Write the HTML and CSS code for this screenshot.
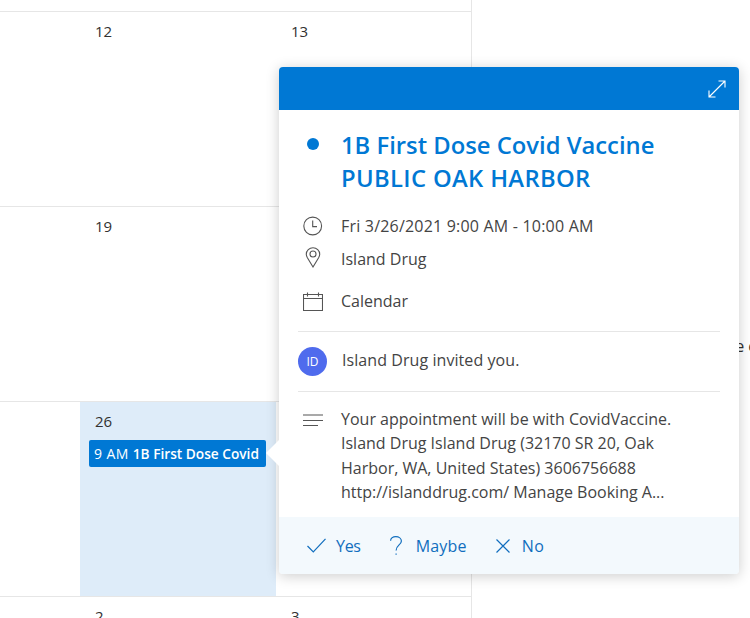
FILE: index.html
```html
<!DOCTYPE html>
<html lang="en">
<head>
    <meta charset="UTF-8">
    <meta name="viewport" content="width=device-width, initial-scale=1.0">
    <title>Calendar</title>
    <link rel="stylesheet" href="styles.css">
</head>
<body>

<div class="page">
    <div class="calendar">
        <div class="cell top"></div><div class="cell top"></div><div class="cell top"></div>

        <div class="cell"></div>
        <div class="cell"><span class="day">12</span></div>
        <div class="cell"><span class="day">13</span></div>

        <div class="cell"></div>
        <div class="cell"><span class="day">19</span></div>
        <div class="cell"></div>

        <div class="cell"></div>
        <div class="cell selected">
            <span class="day">26</span>
            <div class="event">9 AM <b>1B First Dose Covid</b></div>
        </div>
        <div class="cell"></div>

        <div class="cell"></div>
        <div class="cell"><span class="day">2</span></div>
        <div class="cell"><span class="day">3</span></div>
    </div>
    <div class="side">
        <p>e c</p>
    </div>
</div>

<div class="popup">
    <div class="popup-arrow"></div>
    <div class="popup-header">
        <svg width="18" height="18" viewBox="0 0 18 18" fill="none" stroke="#fff" stroke-width="1.1">
            <path d="M1 17L17 1M10.500 1H17V7.500M1 10.500V17H7.500"/>
        </svg>
    </div>

    <div class="title-row">
        <span class="dot"></span>
        <h1>1B First Dose Covid Vaccine <span class="title-second">PUBLIC OAK HARBOR</span></h1>
    </div>

    <div class="info-row time">
        <svg width="20" height="20" viewBox="0 0 20 20" fill="none" stroke="#555" stroke-width="1.1">
            <circle cx="9.700" cy="10" r="8.900"/>
            <path d="M9.700 4.600V10.600H14"/>
        </svg>
        <span>Fri 3/26/2021 9:00 AM - 10:00 AM</span>
    </div>
    <div class="info-row place">
        <svg width="20" height="21" viewBox="0 0 20 21" fill="none" stroke="#555" stroke-width="1.1">
            <path d="M10 20L4.400 10.800C3.500 9.200 3.300 8 3.300 7.200C3.300 3.500 6.300 .7 10 .7S16.700 3.500 16.700 7.200C16.700 8 16.500 9.200 15.600 10.800Z"/>
            <circle cx="10" cy="7" r="3"/>
        </svg>
        <span>Island Drug</span>
    </div>
    <div class="info-row cal">
        <svg width="20" height="19" viewBox="0 0 20 19" fill="none" stroke="#555" stroke-width="1.1">
            <path d="M.5 2.500H19.500V18.500H.5ZM.5 6.500H19.500M4.500 .5V4.500M15.500 .5V4.500"/>
        </svg>
        <span>Calendar</span>
    </div>

    <div class="invite">
        <span class="avatar">ID</span>
        <span class="invite-text">Island Drug invited you.</span>
    </div>

    <div class="notes">
        <svg width="20" height="14" viewBox="0 0 20 14" fill="none" stroke="#555" stroke-width="1.1">
            <path d="M0 2H20M0 7.500H20M0 12.500H15"/>
        </svg>
        <p>Your appointment will be with CovidVaccine. Island Drug Island Drug (32170 SR 20, Oak Harbor, WA, United States) 3606756688 http://islanddrug.com/ Manage Booking A...</p>
    </div>

    <div class="actions">
        <div class="action yes">
            <svg width="19" height="15" viewBox="0 0 19 15" fill="none" stroke="#106ebe" stroke-width="1.2">
                <path d="M.5 8L6.300 14L18.500 .8"/>
            </svg>
            <span>Yes</span>
        </div>
        <div class="action maybe">
            <svg width="12" height="19" viewBox="0 0 12 19" fill="none" stroke="#106ebe" stroke-width="1.2">
                <path d="M.6 4.800C.6 2.300 2.900 .6 5.800 .6C8.900 .6 11.400 2.500 11.400 5C11.400 9 6.100 9 6.100 14.500"/>
                <path d="M6.100 17.500V18.700"/>
            </svg>
            <span>Maybe</span>
        </div>
        <div class="action no">
            <svg width="14" height="14" viewBox="0 0 14 14" fill="none" stroke="#106ebe" stroke-width="1.2">
                <path d="M.5 .5L13.500 13.500M13.500 .5L.5 13.500"/>
            </svg>
            <span>No</span>
        </div>
    </div>
</div>

</body>
</html>
```

FILE: styles.css
```css
* {
    box-sizing: border-box;
}

body {
    margin: 0;
    height: 618px;
    overflow: hidden;
    background-color: white;
    font-family: "Open Sans", "Noto Sans", sans-serif;
    color: #323130;
}

.page {
    display: flex;
    height: 618px;
    overflow: hidden;
}

.calendar {
    display: grid;
    grid-template-columns: 80px 196px 196px;
    grid-template-rows: 12px 195px 195px 195px 21px;
    width: 472px;
    flex-shrink: 0;
    border-right: 1px solid #e6e6e6;
}

.cell {
    border-bottom: 1px solid #e6e6e6;
    padding: 10px 0 0 15px;
}

.cell.top {
    padding: 0;
}

.cell:nth-last-child(-n+3) {
    border-bottom: none;
}

.day {
    display: block;
    font-size: 15px;
    line-height: 19px;
}

.selected {
    background-color: #deecf9;
}

.event {
    margin: 9px 10px 0 -6px;
    height: 27px;
    padding-left: 5px;
    background-color: #0078d4;
    color: white;
    border-radius: 2px;
    font-size: 14px;
    letter-spacing: 0.4px;
    line-height: 27px;
    white-space: nowrap;
    overflow: hidden;
}

.event b {
    font-size: 13.7px;
    font-weight: 600;
    letter-spacing: 0;
}

.side {
    flex-grow: 1;
    min-width: 0;
    display: flex;
    justify-content: flex-end;
    overflow: hidden;
}

.side p {
    flex-shrink: 0;
    margin: 335px -6px 0 0;
    font-size: 16px;
    line-height: 22px;
    white-space: nowrap;
    color: #323130;
}

.popup {
    position: absolute;
    left: 279px;
    top: 67px;
    width: 460px;
    height: 507px;
    background-color: white;
    border-radius: 4px;
    box-shadow: 0 2px 14px rgba(0, 0, 0, 0.2);
}

.popup-arrow {
    position: absolute;
    left: -13px;
    top: 373px;
    width: 0;
    height: 0;
    border-top: 13px solid transparent;
    border-bottom: 13px solid transparent;
    border-right: 13px solid white;
}

.popup-header {
    display: flex;
    justify-content: flex-end;
    align-items: center;
    height: 43px;
    padding-right: 13px;
    background-color: #0078d4;
    border-radius: 4px 4px 0 0;
}

.title-row {
    display: flex;
    margin-top: 19px;
    padding: 0 60px 0 28px;
}

.dot {
    flex-shrink: 0;
    width: 12px;
    height: 12px;
    margin: 9px 22px 0 0;
    border-radius: 50%;
    background-color: #0078d4;
}

h1 {
    margin: 0;
    font-size: 23.8px;
    line-height: 33px;
    font-weight: 600;
    color: #0078d4;
}

.title-second {
    letter-spacing: 0.35px;
}

.info-row {
    display: flex;
    align-items: center;
    padding-left: 24px;
    font-size: 16px;
    line-height: 22px;
    color: #444;
}

.info-row svg {
    flex-shrink: 0;
    margin-right: 18px;
}

.info-row.time {
    margin-top: 20px;
    letter-spacing: 0.2px;
}

.info-row.place {
    margin-top: 11px;
}

.info-row.place svg {
    margin-top: -3px;
}

.info-row.cal {
    margin-top: 20px;
}

.invite {
    display: flex;
    align-items: center;
    gap: 15px;
    margin: 19px 19px 0;
    padding: 15px 0;
    border-top: 1px solid #e6e6e6;
    border-bottom: 1px solid #e6e6e6;
    font-size: 16px;
    color: #444;
}

.invite-text {
    padding-bottom: 4px;
    letter-spacing: 0.07px;
}

.avatar {
    flex-shrink: 0;
    width: 29px;
    height: 29px;
    border-radius: 50%;
    background-color: #4f6bed;
    color: white;
    font-size: 12px;
    line-height: 29px;
    text-align: center;
}

.notes {
    display: flex;
    padding: 15px 40px 0 24px;
    font-size: 16px;
    line-height: 24.300px;
    color: #444;
}

.notes svg {
    flex-shrink: 0;
    margin: 6px 18px 0 0;
}

.notes p {
    margin: 0;
}

.actions {
    position: absolute;
    left: 0;
    right: 0;
    bottom: 0;
    display: flex;
    align-items: center;
    height: 57px;
    padding-left: 28px;
    background-color: #f3f9fd;
    border-radius: 0 0 4px 4px;
    font-size: 16px;
    color: #106ebe;
}

.action {
    display: flex;
    align-items: center;
    margin-right: 29px;
}

.yes span {
    margin-left: 10px;
    letter-spacing: -0.3px;
}

.maybe span {
    margin-left: 14px;
    letter-spacing: 0.2px;
}

.no span {
    margin-left: 12px;
    letter-spacing: 0.5px;
}
```
